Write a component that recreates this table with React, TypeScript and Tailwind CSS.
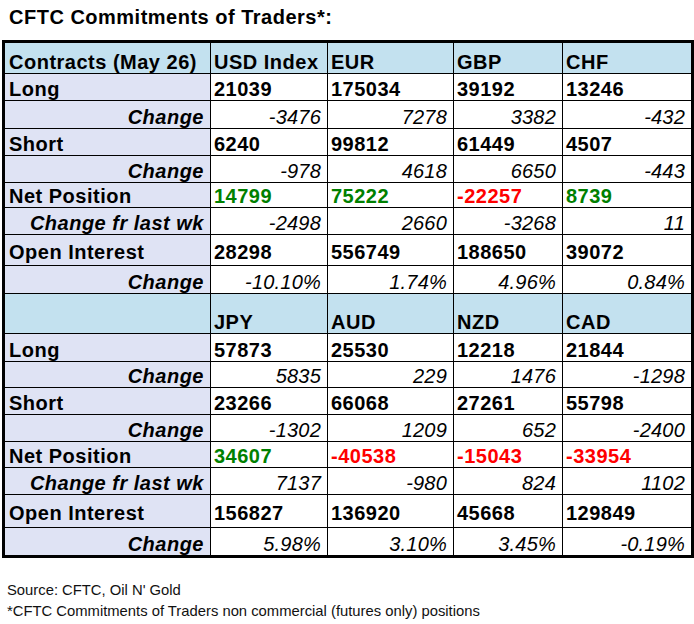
type Tone = "g" | "r" | undefined;

interface Row {
  kind: "head" | "main" | "change";
  label: string;
  values: (string | [string, Tone])[];
  h: string;
  pb?: string;
}

const COLS = ["w-[117px]", "w-[126px]", "w-[109px]", "w-[129px]"];

const rows: Row[] = [
  { kind: "head", label: "Contracts (May 26)", values: ["USD Index", "EUR", "GBP", "CHF"], h: "h-[30px]" },
  { kind: "main", label: "Long", values: ["21039", "175034", "39192", "13246"], h: "h-[27px]" },
  { kind: "change", label: "Change", values: ["-3476", "7278", "3382", "-432"], h: "h-[28px]" },
  { kind: "main", label: "Short", values: ["6240", "99812", "61449", "4507"], h: "h-[27px]" },
  { kind: "change", label: "Change", values: ["-978", "4618", "6650", "-443"], h: "h-[27px]" },
  { kind: "main", label: "Net Position", values: [["14799", "g"], ["75222", "g"], ["-22257", "r"], ["8739", "g"]], h: "h-[25px]" },
  { kind: "change", label: "Change fr last wk", values: ["-2498", "2660", "-3268", "11"], h: "h-[27px]" },
  { kind: "main", label: "Open Interest", values: ["28298", "556749", "188650", "39072"], h: "h-[31px]", pb: "pb-[4px]" },
  { kind: "change", label: "Change", values: ["-10.10%", "1.74%", "4.96%", "0.84%"], h: "h-[28px]" },

  { kind: "head", label: "", values: ["JPY", "AUD", "NZD", "CAD"], h: "h-[40px]" },
  { kind: "main", label: "Long", values: ["57873", "25530", "12218", "21844"], h: "h-[28px]" },
  { kind: "change", label: "Change", values: ["5835", "229", "1476", "-1298"], h: "h-[26px]" },
  { kind: "main", label: "Short", values: ["23266", "66068", "27261", "55798"], h: "h-[27px]" },
  { kind: "change", label: "Change", values: ["-1302", "1209", "652", "-2400"], h: "h-[27px]" },
  { kind: "main", label: "Net Position", values: [["34607", "g"], ["-40538", "r"], ["-15043", "r"], ["-33954", "r"]], h: "h-[26px]" },
  { kind: "change", label: "Change fr last wk", values: ["7137", "-980", "824", "1102"], h: "h-[27px]" },
  { kind: "main", label: "Open Interest", values: ["156827", "136920", "45668", "129849"], h: "h-[33px]", pb: "pb-[5px]" },
  { kind: "change", label: "Change", values: ["5.98%", "3.10%", "3.45%", "-0.19%"], h: "h-[28px]" },
];

function toneClass(t: Tone) {
  if (t === "g") return "text-[#008000]";
  if (t === "r") return "text-[#ff0000]";
  return "text-black";
}

export default function App() {
  return (
    <div className="w-[694px] h-[624px] bg-white text-black font-['Liberation_Sans',Arial,sans-serif]">
      {/* Title */}
      <div className="h-[40px] pl-[9px] pt-[5px] text-[20px] leading-[24px] font-bold tracking-[0.5px]">
        CFTC Commitments of Traders*:
      </div>

      {/* Table */}
      <div className="ml-[2px] w-[692px] border-[3px] border-black">
        {rows.map((row, i) => {
          const pb = row.pb ?? "pb-[2px]";
          const labelBg = row.kind === "head" ? "bg-[#c3e1ef]" : "bg-[#dfe3f4]";
          return (
            <div key={i} className={`flex ${row.h} ${i === 0 ? "" : "border-t border-black"}`}>
              <div
                className={`w-[205px] h-full flex items-end ${pb} ${labelBg} text-[20px] leading-[18px] font-bold tracking-[0.5px] ${
                  row.kind === "change" ? "justify-end pr-[6px] italic" : "pl-[4px]"
                }`}
              >
                {row.label}
              </div>
              {row.values.map((v, j) => {
                const [text, tone] = typeof v === "string" ? [v, undefined] : v;
                if (row.kind === "head") {
                  return (
                    <div key={j} className={`${COLS[j]} h-full border-l border-black bg-[#c3e1ef] flex items-end ${pb} pl-[3px] text-[20px] leading-[18px] font-bold tracking-[0.5px]`}>
                      {text}
                    </div>
                  );
                }
                if (row.kind === "change") {
                  return (
                    <div key={j} className={`${COLS[j]} h-full border-l border-black flex items-end justify-end ${pb} pr-[6px] text-[20px] leading-[18px] italic tracking-[0.2px]`}>
                      {text}
                    </div>
                  );
                }
                return (
                  <div key={j} className={`${COLS[j]} h-full border-l border-black flex items-end ${pb} pl-[3px] text-[20px] leading-[18px] font-bold tracking-[0.5px] ${toneClass(tone)}`}>
                    {text}
                  </div>
                );
              })}
            </div>
          );
        })}
      </div>

      {/* Footnotes */}
      <div className="mt-[22px] pl-[7px] text-[14.8px] leading-[21px] text-[#111]">
        <p>Source: CFTC, Oil N' Gold</p>
        <p>*CFTC Commitments of Traders non commercial (futures only) positions</p>
      </div>
    </div>
  );
}
